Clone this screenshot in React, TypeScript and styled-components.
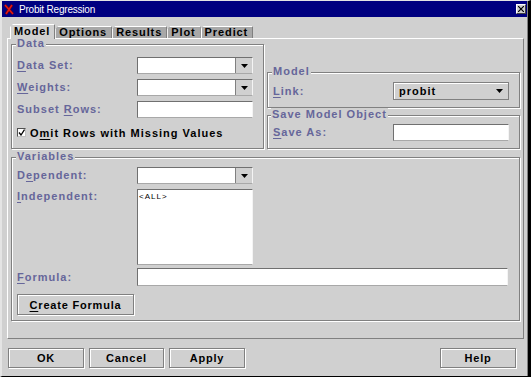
import React from 'react';
import styled, { createGlobalStyle } from 'styled-components';

const face = '#d0d0d0';
const shadow = '#808080';
const labelColor = '#66669a';

const GlobalStyle = createGlobalStyle`
  html, body { margin: 0; padding: 0; background: ${face}; }
  body { font-family: 'Liberation Sans', Arial, sans-serif; }
`;

const Window = styled.div`
  width: 531px;
  height: 377px;
  box-sizing: border-box;
  background: ${face};
  border-top: 1px solid #e4e4e4;
  border-left: 2px solid #e4e4e4;
  border-right: 3px solid #000;
  border-bottom: 1px solid #000;
  box-shadow: inset -1px 0 0 ${shadow};
  display: flex;
  flex-direction: column;
`;

const TitleBar = styled.div`
  height: 16px;
  background: #000080;
  margin-right: 1px;
  padding: 0 1px 0 2px;
  display: flex;
  align-items: center;
  color: #fff;
  font-size: 10px;
  letter-spacing: -0.2px;
`;

const TitleText = styled.span`
  margin-left: 5px;
  flex: 1;
`;

const CloseBox = styled.div`
  width: 10px;
  height: 10px;
  box-sizing: border-box;
  background: ${face};
  border: 1px solid;
  border-color: #fff #404040 #404040 #fff;
  display: flex;
  align-items: center;
  justify-content: center;
`;

const Body = styled.div`
  flex: 1;
  display: flex;
  flex-direction: column;
  padding: 7px 4px 0 5px;
`;

const TabRow = styled.div`
  display: flex;
  align-items: flex-end;
  height: 14px;
  padding-left: 3px;
  position: relative;
  z-index: 1;
`;

const Tab = styled.div<{ $active?: boolean }>`
  height: ${p => (p.$active ? 15 : 12)}px;
  margin-bottom: ${p => (p.$active ? -1 : 0)}px;
  box-sizing: border-box;
  padding: ${p => (p.$active ? 1 : 0)}px 4px 0 3px;
  background: ${p => (p.$active ? face : '#a8a8a8')};
  border-top: 1px solid #fff;
  border-left: 1px solid #fff;
  border-right: 1px solid ${shadow};
  clip-path: polygon(3px 0, 100% 0, 100% 100%, 0 100%, 0 3px);
  font-size: 11px;
  font-weight: bold;
  letter-spacing: 0.9px;
  line-height: 11px;
  color: #000;
`;

const Panel = styled.div`
  height: 301px;
  box-sizing: border-box;
  border: 1px solid;
  border-color: #fff ${shadow} ${shadow} #fff;
  padding: 5px 3px 0 3px;
  display: flex;
  flex-direction: column;
  gap: 8px;
`;

const TopRow = styled.div`
  display: grid;
  grid-template-columns: 253px 253px;
  column-gap: 3px;
  height: 105px;
`;

const RightColumn = styled.div`
  display: flex;
  flex-direction: column;
  justify-content: flex-end;
  gap: 7px;
`;

const Group = styled.div<{ $pad: string }>`
  position: relative;
  box-sizing: border-box;
  border: 1px solid ${shadow};
  box-shadow: inset 1px 1px 0 #fff, 1px 1px 0 #fff;
  padding: ${p => p.$pad};
`;

const Legend = styled.span<{ $left?: number }>`
  position: absolute;
  top: -8px;
  left: ${p => p.$left ?? 4}px;
  padding: 0 1px;
  background: ${face};
  color: ${labelColor};
  font-size: 11px;
  font-weight: bold;
  letter-spacing: 1px;
  line-height: 13px;
`;

const Form = styled.div`
  display: grid;
  grid-template-columns: 120px auto;
  row-gap: 5px;
  align-items: center;
`;

const Label = styled.div<{ $top?: boolean }>`
  color: ${labelColor};
  font-size: 11px;
  font-weight: bold;
  letter-spacing: 1px;
  line-height: 13px;
  align-self: ${p => (p.$top ? 'start' : 'center')};
  margin-top: ${p => (p.$top ? 1 : 0)}px;
  white-space: nowrap;
`;

const Key = styled.span`
  text-decoration: underline;
  text-underline-offset: 2px;
`;

const Field = styled.div<{ $w?: number; $h?: number }>`
  width: ${p => p.$w ?? 116}px;
  height: ${p => p.$h ?? 17}px;
  box-sizing: border-box;
  background: #fff;
  border: 1px solid;
  border-color: #707070 #f4f4f4 #a8a8a8 #707070;
`;

const ComboBox = styled.div`
  width: 116px;
  height: 17px;
  box-sizing: border-box;
  display: flex;
  border: 1px solid;
  border-color: #707070 #f4f4f4 #a8a8a8 #707070;
  background: #fff;
`;

const ComboInput = styled.div`
  flex: 1;
`;

const ArrowButton = styled.div`
  width: 16px;
  background: ${face};
  border-left: 1px solid ${shadow};
  display: flex;
  align-items: center;
  justify-content: center;
`;

const Choice = styled.div`
  width: 116px;
  height: 18px;
  box-sizing: border-box;
  border: 1px solid ${shadow};
  box-shadow: inset 1px 1px 0 #fff;
  background: ${face};
  display: flex;
  align-items: center;
  justify-content: space-between;
  padding: 0 5px 0 5px;
  font-size: 11px;
  font-weight: bold;
  letter-spacing: 1px;
  color: #000;
`;

const ListBox = styled.div`
  width: 116px;
  height: 76px;
  box-sizing: border-box;
  background: #fff;
  border: 1px solid;
  border-color: #707070 #f4f4f4 #a8a8a8 #707070;
  padding: 2px 1px;
  font-size: 8px;
  letter-spacing: 1px;
  line-height: 10px;
  color: #000;
`;

const CheckRow = styled.div`
  display: flex;
  align-items: center;
  gap: 4px;
  margin-top: 9px;
  height: 11px;
  font-size: 11px;
  font-weight: bold;
  letter-spacing: 1px;
  color: #000;
`;

const CheckBox = styled.div`
  width: 9px;
  height: 9px;
  box-sizing: border-box;
  background: #fff;
  border: 1px solid;
  border-color: #505050 #c0c0c0 #c0c0c0 #505050;
  display: flex;
  align-items: center;
  justify-content: center;
`;

const Button = styled.div<{ $w: number; $h?: number; $top?: number }>`
  width: ${p => p.$w}px;
  height: ${p => p.$h ?? 20}px;
  margin-top: ${p => p.$top ?? 0}px;
  box-sizing: border-box;
  border: 1px solid ${shadow};
  box-shadow: inset 1px 1px 0 #fff, 1px 1px 0 #fff;
  background: ${face};
  display: flex;
  align-items: center;
  justify-content: center;
  font-size: 11px;
  font-weight: bold;
  letter-spacing: 0.8px;
  color: #000;
`;

const VarStack = styled.div`
  display: flex;
  flex-direction: column;
`;

const FormulaRow = styled.div`
  display: grid;
  grid-template-columns: 120px auto;
  align-items: center;
  margin-top: 3px;
`;

const ButtonRow = styled.div`
  display: flex;
  gap: 5px;
  margin: 9px 8px 0 1px;
`;

const Spacer = styled.div`
  flex: 1;
`;

const Arrow = () => (
  <svg width="7" height="4" viewBox="0 0 7 4">
    <polygon points="0,0 7,0 3.5,4" fill="#000" />
  </svg>
);

const AppIcon = () => (
  <svg width="10" height="11" viewBox="0 0 10 11">
    <path d="M1 1 L9 10 M8 1 L2 10" stroke="#7a0000" strokeWidth="2.6" />
    <path d="M1 1 L9 10 M8 1 L2 10" stroke="#e01818" strokeWidth="1.4" />
  </svg>
);

const Combo = () => (
  <ComboBox>
    <ComboInput />
    <ArrowButton><Arrow /></ArrowButton>
  </ComboBox>
);

export default function App() {
  return (
    <>
      <GlobalStyle />
      <Window>
        <TitleBar>
          <AppIcon />
          <TitleText>Probit Regression</TitleText>
          <CloseBox>
            <svg width="6" height="6" viewBox="0 0 6 6">
              <path d="M0 0 L6 6 M6 0 L0 6" stroke="#000" strokeWidth="1.2" />
            </svg>
          </CloseBox>
        </TitleBar>
        <Body>
          <TabRow>
            <Tab $active>Model</Tab>
            <Tab>Options</Tab>
            <Tab>Results</Tab>
            <Tab>Plot</Tab>
            <Tab>Predict</Tab>
          </TabRow>
          <Panel>
            <TopRow>
              <Group $pad="12px 10px 10px 5px">
                <Legend>Data</Legend>
                <Form>
                  <Label><Key>D</Key>ata Set:</Label>
                  <Combo />
                  <Label><Key>W</Key>eights:</Label>
                  <Combo />
                  <Label>Subset <Key>R</Key>ows:</Label>
                  <Field />
                </Form>
                <CheckRow>
                  <CheckBox>
                    <svg width="7" height="7" viewBox="0 0 7 7">
                      <path d="M1 3.5 L3 6 L6.5 0.5" stroke="#000" strokeWidth="1.3" fill="none" />
                    </svg>
                  </CheckBox>
                  <span>O<Key>m</Key>it Rows with Missing Values</span>
                </CheckRow>
              </Group>
              <RightColumn>
                <Group $pad="9px 9px 7px 5px">
                  <Legend>Model</Legend>
                  <Form>
                    <Label><Key>L</Key>ink:</Label>
                    <Choice>
                      <span>probit</span>
                      <Arrow />
                    </Choice>
                  </Form>
                </Group>
                <Group $pad="8px 9px 7px 5px">
                  <Legend $left={3}>Save Model Object</Legend>
                  <Form>
                    <Label><Key>S</Key>ave As:</Label>
                    <Field />
                  </Form>
                </Group>
              </RightColumn>
            </TopRow>
            <Group $pad="9px 10px 5px 5px">
              <Legend>Variables</Legend>
              <VarStack>
                <Form>
                  <Label>D<Key>e</Key>pendent:</Label>
                  <Combo />
                  <Label $top><Key>I</Key>ndependent:</Label>
                  <ListBox>&lt;ALL&gt;</ListBox>
                </Form>
                <FormulaRow>
                  <Label><Key>F</Key>ormula:</Label>
                  <Field $w={371} $h={18} />
                </FormulaRow>
                <Button $w={117} $h={21} $top={8}>
                  <span><Key>C</Key>reate Formula</span>
                </Button>
              </VarStack>
            </Group>
          </Panel>
          <ButtonRow>
            <Button $w={76}>OK</Button>
            <Button $w={75}>Cancel</Button>
            <Button $w={76}>Apply</Button>
            <Spacer />
            <Button $w={76}>Help</Button>
          </ButtonRow>
        </Body>
      </Window>
    </>
  );
}
